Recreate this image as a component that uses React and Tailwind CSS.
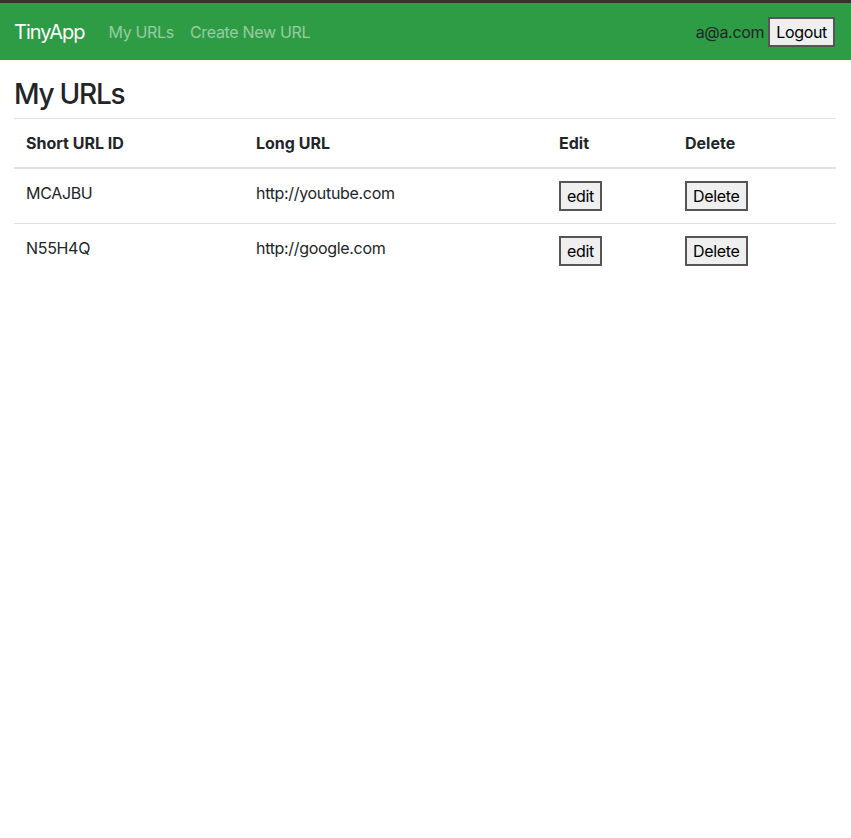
export default function App() {
  const rows = [
    { id: "MCAJBU", url: "http://youtube.com" },
    { id: "N55H4Q", url: "http://google.com" },
  ];
  const btn =
    "bg-[#efefef] border-2 border-[#555] px-[6px] py-[1px] leading-6 text-[16px] text-black tracking-[-0.02em]";
  return (
    <div
      className="min-h-[838px] bg-white text-[#212529] text-[16px] leading-6"
      style={{ fontFamily: 'Inter, "Liberation Sans", sans-serif' }}
    >
      <div className="h-[3px] bg-[#333]" />
      <nav className="flex items-center justify-between bg-[#2e9b45] pl-[14px] pr-4 py-2 h-[57px]">
        <div className="flex items-center tracking-[-0.02em]">
          <span className="text-white text-[20px] leading-[30px] py-[5px] mr-4 tracking-[-0.05em]">TinyApp</span>
          <span className="text-white/50 px-2">My URLs</span>
          <span className="text-white/50 px-2">Create New URL</span>
        </div>
        <div className="flex items-center gap-1">
          <span className="text-[#212529] tracking-[-0.02em]">a@a.com</span>
          <button className={btn}>Logout</button>
        </div>
      </nav>
      <div className="px-[14px] pr-[15px]">
        <h3 className="text-[28px] leading-[1.2] font-medium mt-[18px] mb-[6px] tracking-[-0.045em]">My URLs</h3>
        <table className="w-full border-collapse">
          <thead>
            <tr className="border-t border-[#dee2e6] border-b-2">
              <th className="text-left font-bold p-3 w-[230px] align-bottom">Short URL ID</th>
              <th className="text-left font-bold p-3 w-[303px] align-bottom">Long URL</th>
              <th className="text-left font-bold p-3 w-[126px] align-bottom">Edit</th>
              <th className="text-left font-bold p-3 align-bottom">Delete</th>
            </tr>
          </thead>
          <tbody className="tracking-[-0.02em]">
            {rows.map((r, i) => (
              <tr key={r.id} className={i > 0 ? "border-t border-[#dee2e6]" : ""}>
                <td className="p-3 align-top">{r.id}</td>
                <td className="p-3 align-top">{r.url}</td>
                <td className="p-3 align-top">
                  <button className={btn}>edit</button>
                </td>
                <td className="p-3 align-top">
                  <button className={btn}>Delete</button>
                </td>
              </tr>
            ))}
          </tbody>
        </table>
      </div>
    </div>
  );
}
